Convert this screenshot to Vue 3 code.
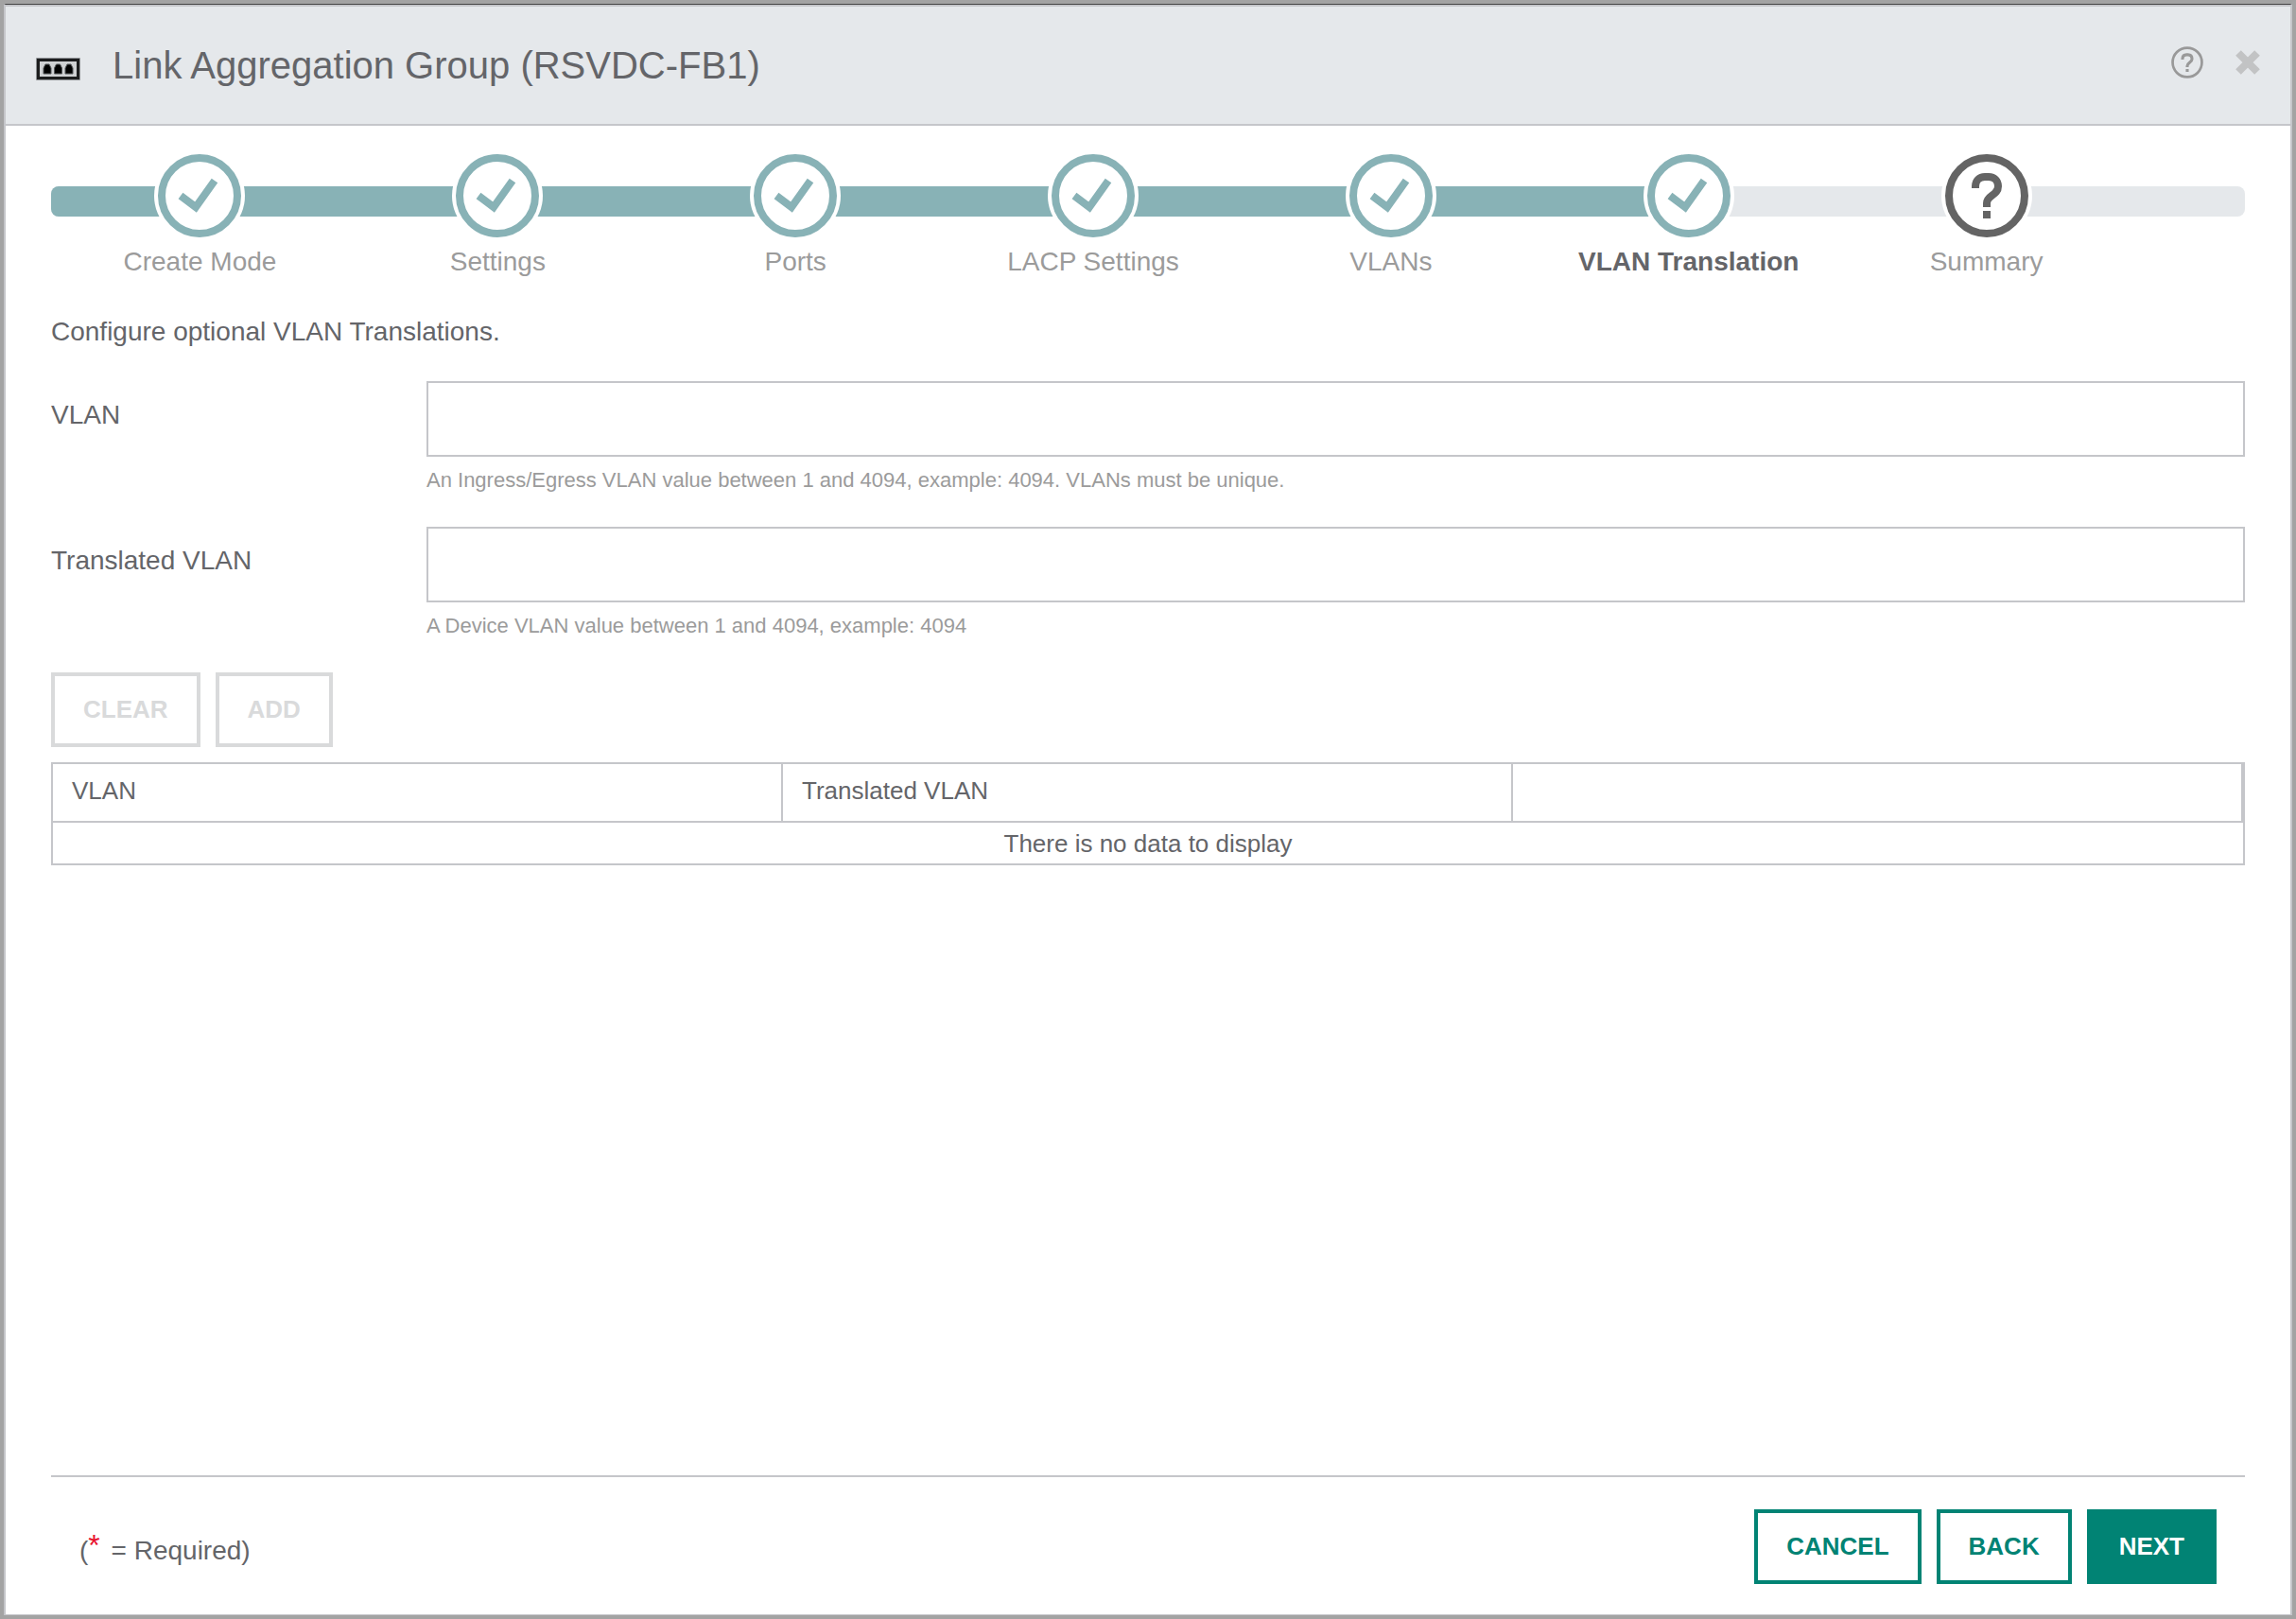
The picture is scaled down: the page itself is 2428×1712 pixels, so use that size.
<script setup>
import { computed, ref } from 'vue'

const steps = ['Create Mode', 'Settings', 'Ports', 'LACP Settings', 'VLANs', 'VLAN Translation', 'Summary']
const current = 5
const vlan = ref('')
const translated = ref('')

// The steps span 95% of the track; the fill ends at the middle of the current step.
const progress = computed(() => `${((current + 0.5) / steps.length) * 95}%`)
</script>

<template>
  <div class="backdrop">
    <main class="dialog">
      <header class="header">
        <svg class="port-icon" viewBox="0 0 47 24" aria-hidden="true">
          <rect x="0" y="0" width="47" height="24" rx="1" fill="#8f9295" />
          <rect x="2.5" y="2.5" width="42" height="19" fill="#cfd1d3" stroke="#1c1d1e" stroke-width="3" />
          <path d="M8 17v-6l2-4h4l2 4v6zM19.500 17v-6l2-4h4l2 4v6zM31 17v-6l2-4h4l2 4v6z" fill="#000" stroke="#55585a" />
        </svg>
        <h1 class="title">Link Aggregation Group (RSVDC-FB1)</h1>
        <button class="icon-button" type="button" aria-label="Help">
          <svg width="34" height="34" viewBox="0 0 88 88" fill="none" stroke="#999" aria-hidden="true">
            <circle cx="44" cy="44" r="40" stroke-width="7" />
            <path d="M31 36v-1c0-7 4-12 11-12h4c7 0 11 5 11 12c0 9-13 9-13 19v3M44 62v8" stroke-width="8" />
          </svg>
        </button>
        <button class="icon-button" type="button" aria-label="Close">
          <svg width="26" height="26" viewBox="0 0 26 26" stroke="#c2c3c4" stroke-width="8" aria-hidden="true">
            <path d="M3 3l20 20M23 3l-20 20" />
          </svg>
        </button>
      </header>

      <section class="content">
        <nav class="wizard" aria-label="Progress">
          <div class="track">
            <div class="fill" :style="{ width: progress }"></div>
          </div>
          <ol class="steps">
            <li
              v-for="(step, i) in steps"
              :key="step"
              class="step"
              :class="{ current: i === current, pending: i > current }"
            >
              <svg class="marker" viewBox="0 0 96 96" fill="none" aria-hidden="true">
                <circle cx="48" cy="48" r="48" fill="#fff" />
                <circle cx="48" cy="48" r="40" stroke="currentColor" stroke-width="8" />
                <path v-if="i <= current" d="M28 48L44 60L64 32" stroke="currentColor" stroke-width="8" />
                <g v-else stroke="currentColor" stroke-width="8">
                  <path d="M36 40v-2c0-6 4-10 10-10h4c6 0 10 4 10 10c0 10-12 9-12 18v4" />
                  <path d="M48 64v8" />
                </g>
              </svg>
              <span class="step-label">{{ step }}</span>
            </li>
          </ol>
        </nav>

        <p class="intro">Configure optional VLAN Translations.</p>

        <form class="form" @submit.prevent>
          <div class="field">
            <label for="vlan">VLAN</label>
            <div class="control">
              <input id="vlan" v-model="vlan" type="text" aria-describedby="vlan-hint" />
              <p id="vlan-hint" class="hint">An Ingress/Egress VLAN value between 1 and 4094, example: 4094. VLANs must be unique.</p>
            </div>
          </div>
          <div class="field">
            <label for="translated">Translated VLAN</label>
            <div class="control">
              <input id="translated" v-model="translated" type="text" aria-describedby="translated-hint" />
              <p id="translated-hint" class="hint">A Device VLAN value between 1 and 4094, example: 4094</p>
            </div>
          </div>
          <div class="buttons">
            <button class="button" type="button" disabled>CLEAR</button>
            <button class="button" type="button" disabled>ADD</button>
          </div>
        </form>

        <table class="table">
          <thead>
            <tr>
              <th scope="col">VLAN</th>
              <th scope="col">Translated VLAN</th>
              <th></th>
            </tr>
          </thead>
          <tbody>
            <tr>
              <td colspan="3">There is no data to display</td>
            </tr>
          </tbody>
        </table>
      </section>

      <footer class="footer">
        <p class="required">(<span class="star">*</span> = Required)</p>
        <div class="buttons">
          <button class="button" type="button">CANCEL</button>
          <button class="button" type="button">BACK</button>
          <button class="button primary" type="button">NEXT</button>
        </div>
      </footer>
    </main>
  </div>
</template>

<style>
body {
  margin: 0;
}
</style>

<style scoped>
.backdrop {
  box-sizing: border-box;
  display: flex;
  min-height: 100vh;
  padding: 4px;
  background: #a3a3a3;
  color: #646569;
  font: 28px/32px "Liberation Sans", Arial, sans-serif;
}
.dialog {
  flex: 1;
  display: flex;
  flex-direction: column;
  border: 2px solid #c5c6ca;
  border-top: 1px solid #444;
  border-bottom-width: 1px;
  background: #fff;
}
h1,
p,
ol {
  margin: 0;
  padding: 0;
}
.header {
  display: flex;
  align-items: center;
  height: 124px;
  padding: 0 32px;
  border-top: 2px solid #c5c6ca;
  border-bottom: 2px solid #c5c6ca;
  background: #e5e8eb;
}
.port-icon {
  width: 47px;
  height: 24px;
  margin-top: 8px;
}
.title {
  flex: 1;
  margin-left: 34px;
  font-size: 40px;
  font-weight: 400;
  line-height: 48px;
}
.icon-button {
  display: flex;
  margin-left: 34px;
  padding: 0 0 6px;
  border: 0;
  background: none;
}
.content {
  flex: 1;
  padding: 26px 48px 0;
}
.wizard {
  display: grid;
}
.track,
.steps {
  grid-area: 1 / 1;
}
.track {
  height: 32px;
  margin-top: 38px;
  border-radius: 8px;
  background: #e5e8eb;
  overflow: hidden;
}
.fill {
  height: 100%;
  background: #88b2b6;
}
.steps {
  z-index: 1;
  display: flex;
  width: 95%;
  list-style: none;
}
.step {
  flex: 1;
  display: flex;
  flex-direction: column;
  align-items: center;
  gap: 6px;
  color: #9b9b9b;
}
.marker {
  width: 96px;
  height: 96px;
  color: #88b2b6;
}
.pending .marker {
  color: #646464;
}
.current .step-label {
  color: #646569;
  font-weight: 700;
}
.intro {
  margin-top: 42px;
}
.form {
  margin-top: 36px;
}
.field {
  display: flex;
  height: 154px;
}
.field label {
  width: 397px;
  padding-top: 20px;
}
.control {
  flex: 1;
}
.control input {
  box-sizing: border-box;
  display: block;
  width: 100%;
  height: 80px;
  padding: 0 20px;
  border: 2px solid #c5c6ca;
  background: #fff;
  color: inherit;
  font: inherit;
}
.hint {
  margin-top: 12px;
  color: #9b9b9b;
  font-size: 22px;
  line-height: 26px;
}
.buttons {
  display: flex;
  gap: 16px;
}
.button {
  height: 79px;
  padding: 0 30px 2px;
  border: 4px solid #018374;
  background: #fff;
  color: #018374;
  font: 700 26px/32px "Liberation Sans", Arial, sans-serif;
}
.button:disabled {
  border-color: #d9dadb;
  color: #d9dadb;
}
.button.primary {
  background: #018374;
  color: #fff;
}
.table {
  width: 100%;
  margin-top: 16px;
  border: 2px solid #c5c6ca;
  border-spacing: 0;
  table-layout: fixed;
}
.table th {
  height: 56px;
  padding: 0 20px 4px;
  border-right: 2px solid #c5c6ca;
  border-bottom: 2px solid #c5c6ca;
  font-size: 26px;
  font-weight: 400;
  text-align: left;
}
.table td {
  height: 43px;
  padding: 0;
  font-size: 26px;
  text-align: center;
}
.footer {
  display: flex;
  justify-content: space-between;
  margin: 0 48px;
  padding: 34px 30px 32px;
  border-top: 2px solid #c5c6ca;
}
.required {
  padding-top: 28px;
}
.star {
  margin-right: 4px;
  color: #e8112d;
  font-size: 32px;
  line-height: 0;
  vertical-align: 4px;
}
</style>
